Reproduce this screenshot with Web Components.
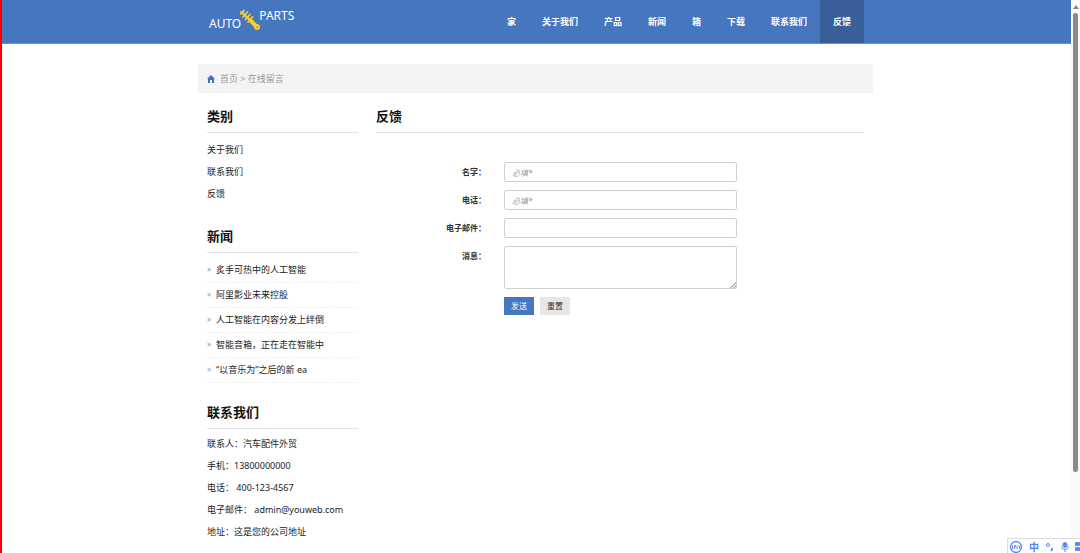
<!DOCTYPE html>
<html lang="zh-CN">
<head>
<meta charset="utf-8">
<title>在线留言</title>
<style>
html, body { margin: 0; height: 100%; overflow: hidden; }
body { background: #fff; color: #222; font: 9px/22px "Noto Sans", "Noto Sans CJK SC", sans-serif; }
</style>
</head>
<body>
<browser-frame>
  <site-header></site-header>
  <page-container>
    <bread-crumb slot="crumb"></bread-crumb>
    <div slot="side">
      <side-section heading="类别"><link-list></link-list></side-section>
      <side-section heading="新闻"><news-list></news-list></side-section>
      <side-section heading="联系我们"><contact-info></contact-info></side-section>
    </div>
    <side-section slot="main" heading="反馈"><feedback-form></feedback-form></side-section>
  </page-container>
</browser-frame>
<ime-bar></ime-bar>
<script>
function define(name, html) {
  customElements.define(name, class extends HTMLElement {
    constructor() {
      super();
      this.attachShadow({ mode: "open" }).innerHTML = html;
    }
    connectedCallback() {
      const title = this.shadowRoot.querySelector("[data-heading]");
      if (title) title.textContent = this.getAttribute("heading");
    }
  });
}

define("browser-frame", `
<style>
:host { display: flex; height: 100vh; }
.edge { position: absolute; left: 0; top: 0; bottom: 0; width: 2px; background: #f00; }
.view { flex: 1; min-width: 0; overflow: hidden; }
.bar { width: 9px; background: #fafafa; display: flex; flex-direction: column; align-items: center; }
svg { display: block; margin: 4px 0 3px; }
.thumb { width: 5px; height: 83%; border-radius: 3px; background: #8b8b8b; }
</style>
<div class="view"><slot></slot></div>
<div class="edge"></div>
<div class="bar"><svg width="6" height="6" viewBox="0 0 6 6"><path d="M3 1L6 5H0z" fill="#858585"/></svg><div class="thumb"></div></div>`);

define("site-header", `
<style>
:host { display: block; background: #4676be; border-bottom: 1px solid #6791d3; }
.inner { max-width: 657px; margin: 0 auto; display: flex; justify-content: space-between; height: 43px; padding: 0 9px; }
.logo { display: flex; align-items: flex-start; padding: 7px 0 0 2px; color: #fff; font-size: 12px; line-height: 18px; text-decoration: none; }
.auto { padding-top: 8px; }
.logo svg { margin: 2px -2px 0 -2px; }
nav { display: flex; }
nav a { padding: 0 13px; line-height: 44px; font-weight: 700; color: #fff; text-decoration: none; white-space: nowrap; }
nav a.on { background: #385f9a; }
</style>
<div class="inner">
<a class="logo" href="#"><span class="auto">AUTO</span>
<svg width="22" height="22" viewBox="0 0 22 22" fill="none" stroke="#fbd02d" stroke-linecap="round"><path d="M2.500 3L14 14" stroke-width="2.400"/><path d="M5 1.500L1.500 5M8.500 3L4 8M11 5.500L6.500 10.500M13.500 8L9 13" stroke-width="1.700"/><path d="M12 12L16.500 16.500" stroke-width="4"/><circle cx="18" cy="18" r="2" stroke-width="2"/></svg><span>PARTS</span></a>
<nav><a href="#">家</a><a href="#">关于我们</a><a href="#">产品</a><a href="#">新闻</a><a href="#">箱</a><a href="#">下载</a><a href="#">联系我们</a><a href="#" class="on">反馈</a></nav>
</div>`);

define("page-container", `
<style>
:host { display: block; max-width: 675px; margin: 20px auto 0; }
.cols { display: grid; grid-template-columns: 151px minmax(0, 1fr); gap: 18px; padding: 11px 9px 0; }
</style>
<slot name="crumb"></slot>
<div class="cols"><slot name="side"></slot><slot name="main"></slot></div>`);

define("bread-crumb", `
<style>
:host { display: flex; align-items: center; gap: 5px; height: 29px; padding: 0 9px; background: #f4f4f4; color: #999; }
a { color: inherit; text-decoration: none; }
</style>
<svg width="8" height="8" viewBox="0 0 8 8" fill="#3f74bd"><path d="M4 0L8 4H7V8H5V5H3V8H1V4H0z"/></svg>
<span><a href="#">首页</a> &gt; <a href="#">在线留言</a></span>`);

define("side-section", `
<style>
:host { display: block; margin-bottom: 17px; }
h2 { margin: 0 0 4px; font-size: 13px; line-height: 24px; padding-bottom: 4px; border-bottom: 1px solid #e2e2e2; color: #111; }
</style>
<h2 data-heading></h2><slot></slot>`);

define("link-list", `
<style>
:host { display: block; }
ul { margin: 0; padding: 2px 0; list-style: none; }
a { color: inherit; text-decoration: none; }
</style>
<ul><li><a href="#">关于我们</a></li><li><a href="#">联系我们</a></li><li><a href="#">反馈</a></li></ul>`);

define("news-list", `
<style>
:host { display: block; }
ul { margin: 0; padding: 1px 0 0; list-style: none; }
li { display: flex; gap: 5px; line-height: 24px; border-bottom: 1px dashed #eee; }
li::before { content: "»"; color: #999; font-size: 8px; line-height: 22px; }
a { color: inherit; text-decoration: none; }
</style>
<ul><li><a href="#">炙手可热中的人工智能</a></li><li><a href="#">阿里影业未来控股</a></li><li><a href="#">人工智能在内容分发上绊倒</a></li><li><a href="#">智能音箱，正在走在智能中</a></li><li><a href="#">“以音乐为”之后的新 ea</a></li></ul>`);

define("contact-info", `
<style>
:host { display: block; }
p { margin: 0; white-space: pre; }
</style>
<p>联系人：汽车配件外贸</p><p>手机：13800000000</p><p>电话： 400-123-4567</p><p>电子邮件： admin@youweb.com</p><p>地址：这是您的公司地址</p>`);

define("feedback-form", `
<style>
:host { display: block; padding-top: 25px; }
form { display: grid; grid-template-columns: 110px minmax(0, 233px); gap: 8px 18px; align-items: start; }
label { text-align: right; font-size: 8px; line-height: 20px; font-weight: 700; color: #333; }
input, textarea { box-sizing: border-box; width: 100%; height: 20px; margin: 0; padding: 0 7px; border: 1px solid #d0d0d0; border-radius: 2px; font: inherit; font-size: 8px; line-height: 18px; background: #fff; display: block; }
textarea { height: 43px; }
textarea::-webkit-resizer { background: linear-gradient(135deg, transparent 80%, #bbb 80% 84%, transparent 84% 90%, #bbb 90% 94%, transparent 94%); }
::placeholder { color: #999; font-style: italic; opacity: 1; }
.actions { grid-column: 2; display: flex; gap: 6px; }
button { border: 0; padding: 0 7px; height: 18px; font: inherit; font-size: 8px; line-height: 18px; background: #e7e7e7; color: #333; }
button[type=submit] { background: #4676be; color: #fff; }
</style>
<form>
<label for="name">名字：</label><input id="name" placeholder="必填*">
<label for="tel">电话：</label><input id="tel" type="tel" placeholder="必填*">
<label for="mail">电子邮件：</label><input id="mail" type="email">
<label for="msg">消息：</label><textarea id="msg"></textarea>
<div class="actions"><button type="submit">发送</button><button type="reset">重置</button></div>
</form>`);

define("ime-bar", `
<style>
:host { position: fixed; right: 0; bottom: 0; box-sizing: border-box; width: 73px; height: 15px; display: flex; align-items: center; gap: 6px; padding: 2px 0 0 1px; overflow: hidden; background: #fff; border: solid #ddd; border-width: 1px 0 0 1px; color: #4f7ff0; font-size: 10px; line-height: 12px; font-weight: 700; }
svg { flex: none; }
</style>
<svg width="14" height="14" viewBox="0 0 14 14" fill="none" stroke="#5b88f2"><circle cx="7" cy="7" r="5.5" stroke-width="1.3"/><path d="M3.5 5.5V9M5.500 9V5.500H7M5.500 7H7M8 5.500V9M9.500 5.500L10.500 7L11.500 5.500M10.500 7V9"/></svg>
<span>中</span>
<svg width="10" height="10" viewBox="0 0 10 10" fill="none" stroke="#5b88f2"><circle cx="3" cy="3" r="1.5"/><path d="M7 6v1.500L6 9" stroke-width="1.800"/></svg>
<svg width="8" height="10" viewBox="0 0 8 10" fill="none" stroke="#5b88f2"><rect x="2" y="0.500" width="4" height="5" rx="2" fill="#5b88f2"/><path d="M.5 4.500a3.500 3 0 0 0 7 0M4 7.500V10"/></svg>
<svg width="8" height="10" viewBox="0 0 8 10" fill="#5b88f2"><rect width="5" height="4" rx="1"/><rect x="6" width="4" height="4" rx="1"/><rect y="5" width="5" height="4" rx="1"/><rect x="6" y="5" width="4" height="4" rx="1"/></svg>`);
</script>
</body>
</html>
